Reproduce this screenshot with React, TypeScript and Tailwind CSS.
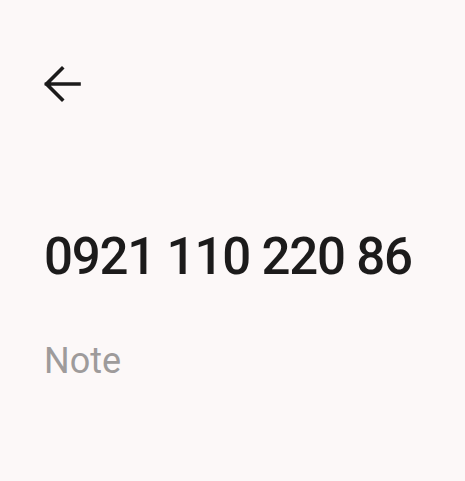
export default function App() {
  return (
    <div
      className="w-[465px] h-[481px] bg-[#fcf8f8] flex flex-col"
      style={{ fontFamily: "Roboto, 'Noto Sans', sans-serif" }}
    >
      {/* Top bar */}
      <div className="h-[227px] pl-[42px] pt-[64px]">
        <button className="w-[40px] h-[40px] flex items-center justify-center text-[#1c1b1b]">
          <svg width="40" height="40" viewBox="0 0 40 40" fill="none">
            <path
              d="M37 20H4.5M20 4.5L4.5 20L20 35.5"
              stroke="currentColor"
              strokeWidth="3.6"
              strokeLinecap="square"
            />
          </svg>
        </button>
      </div>

      {/* Number */}
      <div className="px-[44px]">
        <div className="text-[51px] leading-[60px] font-medium tracking-[-1.2px] text-[#1c1b1b] whitespace-nowrap">
          0921 110 220 86
        </div>
        <div className="mt-[54px] text-[36px] leading-[40px] text-[#9e9b9b]">
          Note
        </div>
      </div>
    </div>
  );
}
